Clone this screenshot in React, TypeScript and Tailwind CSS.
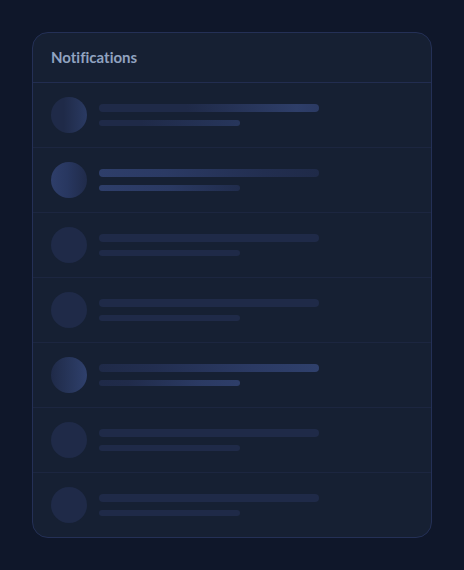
import React from 'react';

// each row is a skeleton frozen at a different point of its shimmer
const rows = [
  {
    avatar: 'bg-[linear-gradient(90deg,#1f2a48_0%,#1f2a48_35%,#2a3a62_100%)]',
    line1: 'bg-[linear-gradient(90deg,#1f2a48_0%,#1f2a48_40%,#2e3e69_90%,#2b3a63_100%)]',
    line2: 'bg-[linear-gradient(90deg,#1f2a48_0%,#1f2a48_30%,#27365c_100%)]',
  },
  {
    avatar: 'bg-[linear-gradient(90deg,#2e3e6a_0%,#283760_45%,#202b4a_100%)]',
    line1: 'bg-[linear-gradient(90deg,#2e3e6a_0%,#2b3a64_30%,#222e50_75%,#1f2a48_100%)]',
    line2: 'bg-[linear-gradient(90deg,#2e3e6a_0%,#2a3962_50%,#202c4c_100%)]',
  },
  { avatar: 'bg-[#1f2a48]', line1: 'bg-[#1f2a48]', line2: 'bg-[#1f2a48]' },
  { avatar: 'bg-[#1f2a48]', line1: 'bg-[#1f2a48]', line2: 'bg-[#1f2a48]' },
  {
    avatar: 'bg-[linear-gradient(90deg,#1f2a48_0%,#263458_45%,#2f406c_100%)]',
    line1: 'bg-[linear-gradient(90deg,#1f2a48_0%,#222e50_25%,#2b3a64_70%,#2f406c_100%)]',
    line2: 'bg-[linear-gradient(90deg,#1f2a48_0%,#202b4a_20%,#2b3a63_70%,#2e3e69_100%)]',
  },
  { avatar: 'bg-[#1f2a48]', line1: 'bg-[#1f2a48]', line2: 'bg-[#1f2a48]' },
  { avatar: 'bg-[#1f2a48]', line1: 'bg-[#1f2a48]', line2: 'bg-[#1f2a48]' },
];

const SkeletonRow = ({ row, last }: { row: (typeof rows)[number]; last: boolean }) => (
  <div className={`flex items-center gap-3 px-[18px] py-[14px] ${last ? '' : 'border-b border-[#1c2640]'}`}>
    <div className={`w-9 h-9 rounded-full shrink-0 ${row.avatar}`}></div>
    <div className="flex flex-col gap-2">
      <div className={`w-[220px] h-2 rounded-full ${row.line1}`}></div>
      <div className={`w-[141px] h-1.5 rounded-full ${row.line2}`}></div>
    </div>
  </div>
);

export default function App() {
  return (
    <div className="min-h-[570px] bg-[#0f172a] p-8 font-['Lato',sans-serif]">
      <div className="w-[400px] rounded-2xl border border-[#243056] bg-[#162033] overflow-hidden">
        <div className="h-[50px] flex items-center px-[18px] border-b border-[#222d50]">
          <h2 className="text-[15px] font-bold text-[#91a3c0] [font-variant-ligatures:none]">Notifications</h2>
        </div>
        {rows.map((row, i) => (
          <SkeletonRow key={i} row={row} last={i === rows.length - 1} />
        ))}
      </div>
    </div>
  );
}
